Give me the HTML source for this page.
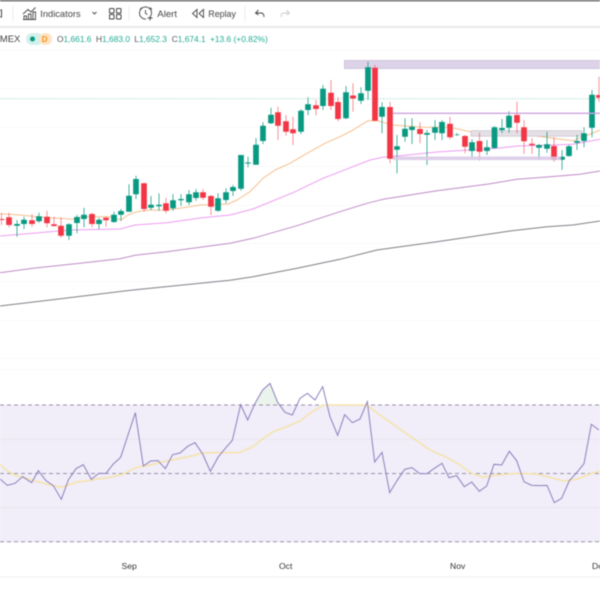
<!DOCTYPE html>
<html><head><meta charset="utf-8"><style>
html,body{margin:0;padding:0;background:#fff;width:600px;height:600px;overflow:hidden}
svg{display:block;filter:blur(.4px)}
text{font-family:"Liberation Sans",sans-serif}
</style></head><body>
<svg width="600" height="600" viewBox="0 0 600 600" xmlns="http://www.w3.org/2000/svg">
<rect width="600" height="600" fill="#fff"/>
<!-- top bar -->
<rect y="0" width="600" height="1.4" fill="#666"/>
<rect y="26" width="600" height="2" fill="#e8e8ea"/>
<g stroke="#eeeef0" stroke-width="1"><path d="M13 6V21M129 6V21M245 6V21"/></g>
<!-- toolbar icons -->
<g fill="none" stroke="#444" stroke-width="1">
<path d="M-1 10H1.5V17H-1"/>
<path d="M23 14L28 9.5L31 12L35.5 7.5M24 19V16H26.5V19M28.5 19V14H31V19M33 19V12H35.5V19M23 19.5H36" stroke-width=".9"/>
<path d="M92.5 12L94.5 14L96.5 12" stroke-width=".9"/>
<rect x="109.5" y="8.5" width="4.5" height="4.5" rx=".8"/><rect x="116.5" y="8.5" width="4.5" height="4.5" rx=".8"/><rect x="109.5" y="14.5" width="4.5" height="4.5" rx=".8"/><rect x="116.5" y="14.5" width="4.5" height="4.5" rx=".8"/>
<path d="M150 17A6 6 0 1 0 146 19M140 9.5L142 7.5M150 7.5L152 9.5M145.5 10V13.5L147.5 14.5M150 16V20.5M147.5 18H152.5" stroke-width=".9"/>
<path d="M197 9.5L192.5 13.5L197 17.5ZM203.5 9.5L199 13.5L203.5 17.5Z" stroke-width=".9"/>
<path d="M258.5 10L255.5 13L258.5 15M255.5 13H261C263 13 264 14.5 264 17" stroke-width=".9"/>
<path d="M286.5 10L289.5 13L286.5 15M289.5 13H284C282 13 281 14.5 281 17" stroke="#c9cbd1" stroke-width=".9"/>
</g>
<g fill="#444">
<text x="40.3" y="17" font-size="9.3">Indicators</text>
<text x="157.3" y="17" font-size="9.6">Alert</text>
<text x="208.3" y="17" font-size="8.9">Replay</text>
</g>
<!-- grid -->
<path d="M0 50.5H600M0 88.5H600M0 127.5H600M0 166.5H600M0 205.5H600M0 243.5H600M0 281.5H600M0 320.5H600M0 358.5H600M0 369.5H600" stroke="#f9f9fa" stroke-width="1"/>
<!-- legend -->
<text x="-6" y="42" font-size="9.5" fill="#444">TMEX</text>
<rect x="26" y="33" width="17" height="12" rx="6" fill="#d3f0ec"/>
<rect x="39" y="33" width="13" height="12" rx="6" fill="#ffe3c4"/>
<circle cx="32.5" cy="39" r="2.5" fill="#089981"/>
<text x="44.7" y="42" font-size="8" fill="#f7931a" font-weight="bold" text-anchor="middle">D</text>
<g font-size="8.4" fill="#22ab94">
<text x="57" y="42"><tspan fill="#555">O</tspan>1,661.6</text>
<text x="96" y="42"><tspan fill="#555">H</tspan>1,683.0</text>
<text x="134.3" y="42"><tspan fill="#555">L</tspan>1,652.3</text>
<text x="171.7" y="42"><tspan fill="#555">C</tspan>1,674.1</text>
<text x="210" y="42">+13.6 (+0.82%)</text>
</g>
<!-- dotted price line -->
<path d="M0 98.7H600" stroke="#8fcfc4" stroke-width="1" stroke-dasharray="1 1.5"/>
<!-- moving averages -->
<g fill="none" stroke-width="1" stroke-linejoin="round">
<polyline stroke="#808088" points="0,306 67,298 133,290 230,280.3 253,276.7 297,268.3 340,259.3 377,250 437,241.7 510,231 547,226.7 573,225 600,221"/>
<polyline stroke="#c08ac8" points="0,272.7 33,268.3 80,263.3 120,258.7 135,255.3 167,251.7 200,247.3 230,243.3 253,238.3 297,225.7 340,211.7 367,203.3 383,199.3 437,190.7 487,184.3 517,179.3 550,176.7 580,174.3 600,171"/>
<polyline stroke="#ee9cf0" points="0,236 33,233.3 70,230 120,229 135,225 167,222.7 200,218 230,215 253,209 293,192.7 323,178.3 353,166.7 370,160 383,157.3 397,156 440,151.7 497,148.3 517,146 553,145 573,144.3 600,139.3"/>
<polyline stroke="#f5c08e" points="0,213.7 20,215 43,217.3 72,219.3 83,216.7 110,216.7 121,220 128,215 137,211.7 150,210 163,210.3 180,208.3 200,205 228,204 237,200 250,191.7 263,178.3 275,170 290,163.3 307,153.3 325,143.3 340,136.7 353,130 368,120.7 377,120.7 393,125 423,127.3 450,127.3 470,131.7 490,136 513,133 553,138.3 573,140.7 588,135 600,130"/>
</g>
<!-- zones -->
<rect x="344.5" y="60.5" width="256" height="8" fill="#ddd3e8" stroke="#c9bdd8" stroke-width=".8"/>
<rect x="471" y="130.7" width="111" height="5.5" fill="#e4e0e6" stroke="#c8c2cc" stroke-width=".7"/>
<!-- wicks green -->
<path fill="none" stroke="#089981" stroke-opacity=".75" stroke-width="1" d="M17 220V236.7M24 216.7V229M39 212.7V222.7M69 223.3V240M77 215V233.3M84 207.7V227.3M99 217.7V229M114 211.7V222.7M121 209V221M129 184.3V211.7M136 175.7V199M151 196V210M159 193.3V210.7M173 194V210.7M181 194V206M189 190V205M196 189V200.7M218 193.3V211.7M226 188.3V203.3M233 185V196M241 155V190.7M248 156.7V167.3M256 138V164.7M263 122.3V144M271 107.7V124M301 109.3V134M308 97.3V115.3M323 85V110M346 86V119.3M361 87.3V104M368 61.7V100M382 102.3V133.3M397 135V173.3M405 118.3V141.7M412 118.3V144M427 130V165M435 120V140M442 120V140M457 133V136M472 139.3V157.3M487 140V155M494.5 126V148.7M502 119V133.3M509 111.3V132.7M539 144V160M547 131.7V152.7M562 150V170M569 145V156.7M577 135V150M584 127.3V147.3M592 90V137.3"/>
<!-- wicks red -->
<path fill="none" stroke="#f23645" stroke-opacity=".55" stroke-width="1" d="M1.5 213V225M9 212.7V227.3M32 214.3V226.7M47 210.7V227.3M54 216.7V226.7M61 217.3V237.7M92 212.7V227.3M106 216.7V226.7M144 182.7V211.7M166 197.7V213.3M203 189V200M211 195V215M278 106.7V140M286 115V135.7M293 116.7V145M316 100V115.3M331 80V110M338 97.3V121.3M353 83.3V111.7M375 65V121M390 101.7V163.3M420 122.3V143.3M450 116.7V139.3M465 135V153.3M479.5 132.7V160.7M517 101.7V133.3M524 120V154M532 138.3V154M554 137.3V161.7M599 76.7V101.7"/>
<!-- bodies green -->
<path fill="none" stroke="#089981" stroke-width="5.7" d="M17 224V225.7M24 219.7V224M39 216.3V221.3M69 224.3V235.7M77 217V223M84 214.7V219M99 219.7V224M114 214.7V222M121 211V214.7M129 195.7V211.7M136 179V194.3M151 204.7V207.7M159 204.7V206.3M173 200.3V208.3M181 199V200.3M189 194.3V202.3M196 192.3V198M218 198.3V210.7M226 192.3V200M233 187V191M241 155V188.7M248 162.5V163.5M256 144.7V164.7M263 125.7V141M271 114.7V123.3M301 110.7V131.7M308 104.3V110M323 88.7V106M346 92.3V118.3M361 93.3V100.7M368 67.3V90.7M382 107V116.7M397 146.3V149.7M405 128.7V136.7M412 126.7V130M427 133V134.7M435 127.3V132.7M442 122V133.3M457 134.5V135M472 142.3V151M487 147.3V151M494.5 127.3V148M502 128V130M509 115.7V127.7M539 145V147.7M547 144.3V148.7M562 156.7V159.7M569 146.3V156M577 141V142.7M584 133.3V141M592 94.7V127.7"/>
<!-- bodies red -->
<path fill="none" stroke="#f23645" stroke-width="5.7" d="M1.5 219V220M9 217.3V225M32 220.3V224M47 216.7V223.3M54 224.3V226M61 225.7V235.7M92 214V224M106 217.7V220.3M144 183.3V209M166 203.3V210.7M203 192.3V197.7M211 196V206.7M278 112.3V125.7M286 121.3V131.7M293 129.3V133.3M316 105.3V109M331 92.7V106M338 102V119M353 95.5V98.5M375 67.7V120.7M390 107V158.7M420 129V134M450 123.7V137.3M465 136V146.7M479.5 141V151.7M517 115V122.7M524 127.3V141.3M532 143.7V145.3M554 146V160M599 95V97.7"/>
<!-- zones over candles -->
<path d="M393 113.3H600" stroke="#cda3dc" stroke-width="1.4"/>
<rect x="393" y="156.5" width="168" height="3.6" fill="#d9c8e6" fill-opacity=".85"/>
<!-- RSI panel -->
<rect x="0" y="405" width="600" height="137" fill="#f1edf9"/>
<path d="M255 405L262.7 390L270 383.3L277.7 402.3L279 405Z" fill="#eaf4ec"/>
<path d="M0 439.5H600M0 507.5H600" stroke="#e9e6ef" stroke-width="1"/>
<path d="M0 405H600M0 473.5H600M0 541.7H600" stroke="#9a93a8" stroke-width="1" stroke-dasharray="4 3"/>
<g transform="translate(0,370) scale(.33333)" fill="none">
<polyline vector-effect="non-scaling-stroke" stroke="#f6e3a8" stroke-width="1.5" points="0,284 22,303 45,315 70,323 100,331 130,340 160,347 184,352 205,345 230,336 270,331 300,326 330,322 370,312 410,292 450,285 490,275 530,267 570,259 610,249 650,248 720,247 760,229 790,205 820,185 860,170 900,153 930,130 970,105 1100,105 1140,135 1190,170 1240,205 1290,240 1340,262 1380,285 1415,310 1450,322 1490,315 1550,310 1610,312 1650,322 1690,333 1730,328 1770,312 1800,303"/>
<polyline vector-effect="non-scaling-stroke" stroke="#8d80bd" stroke-width="1" points="0,327 22,346 45,340 68,320 95,338 115,302 138,332 160,347 184,388 205,330 228,296 250,284 274,328 296,310 318,310 340,282 362,262 384,195 406,128 430,288 452,273 474,272 496,296 518,254 540,249 563,229 585,218 608,252 631,304 654,262 676,235 697,211 722,104 743,150 765,100 788,60 810,40 833,97 855,127 877,135 900,85 922,70 945,90 968,50 990,140 1013,196 1034,134 1057,158 1080,147 1102,95 1124,276 1146,247 1169,368 1191,332 1214,298 1236,293 1259,311 1281,311 1303,295 1326,280 1347,323 1370,317 1393,350 1415,336 1438,364 1460,348 1482,283 1505,285 1528,244 1550,272 1572,335 1595,346 1618,347 1641,346 1663,398 1685,385 1708,332 1730,308 1752,281 1774,163 1797,180"/>
</g>
<!-- time axis -->
<g font-size="8.6" fill="#333">
<text x="121.5" y="569">Sep</text>
<text x="279" y="569">Oct</text>
<text x="450" y="569">Nov</text>
<text x="592" y="569">Dec</text>
</g>
<rect x="0" y="576.5" width="600" height="1" fill="#eeeef0"/>
</svg>
</body></html>
